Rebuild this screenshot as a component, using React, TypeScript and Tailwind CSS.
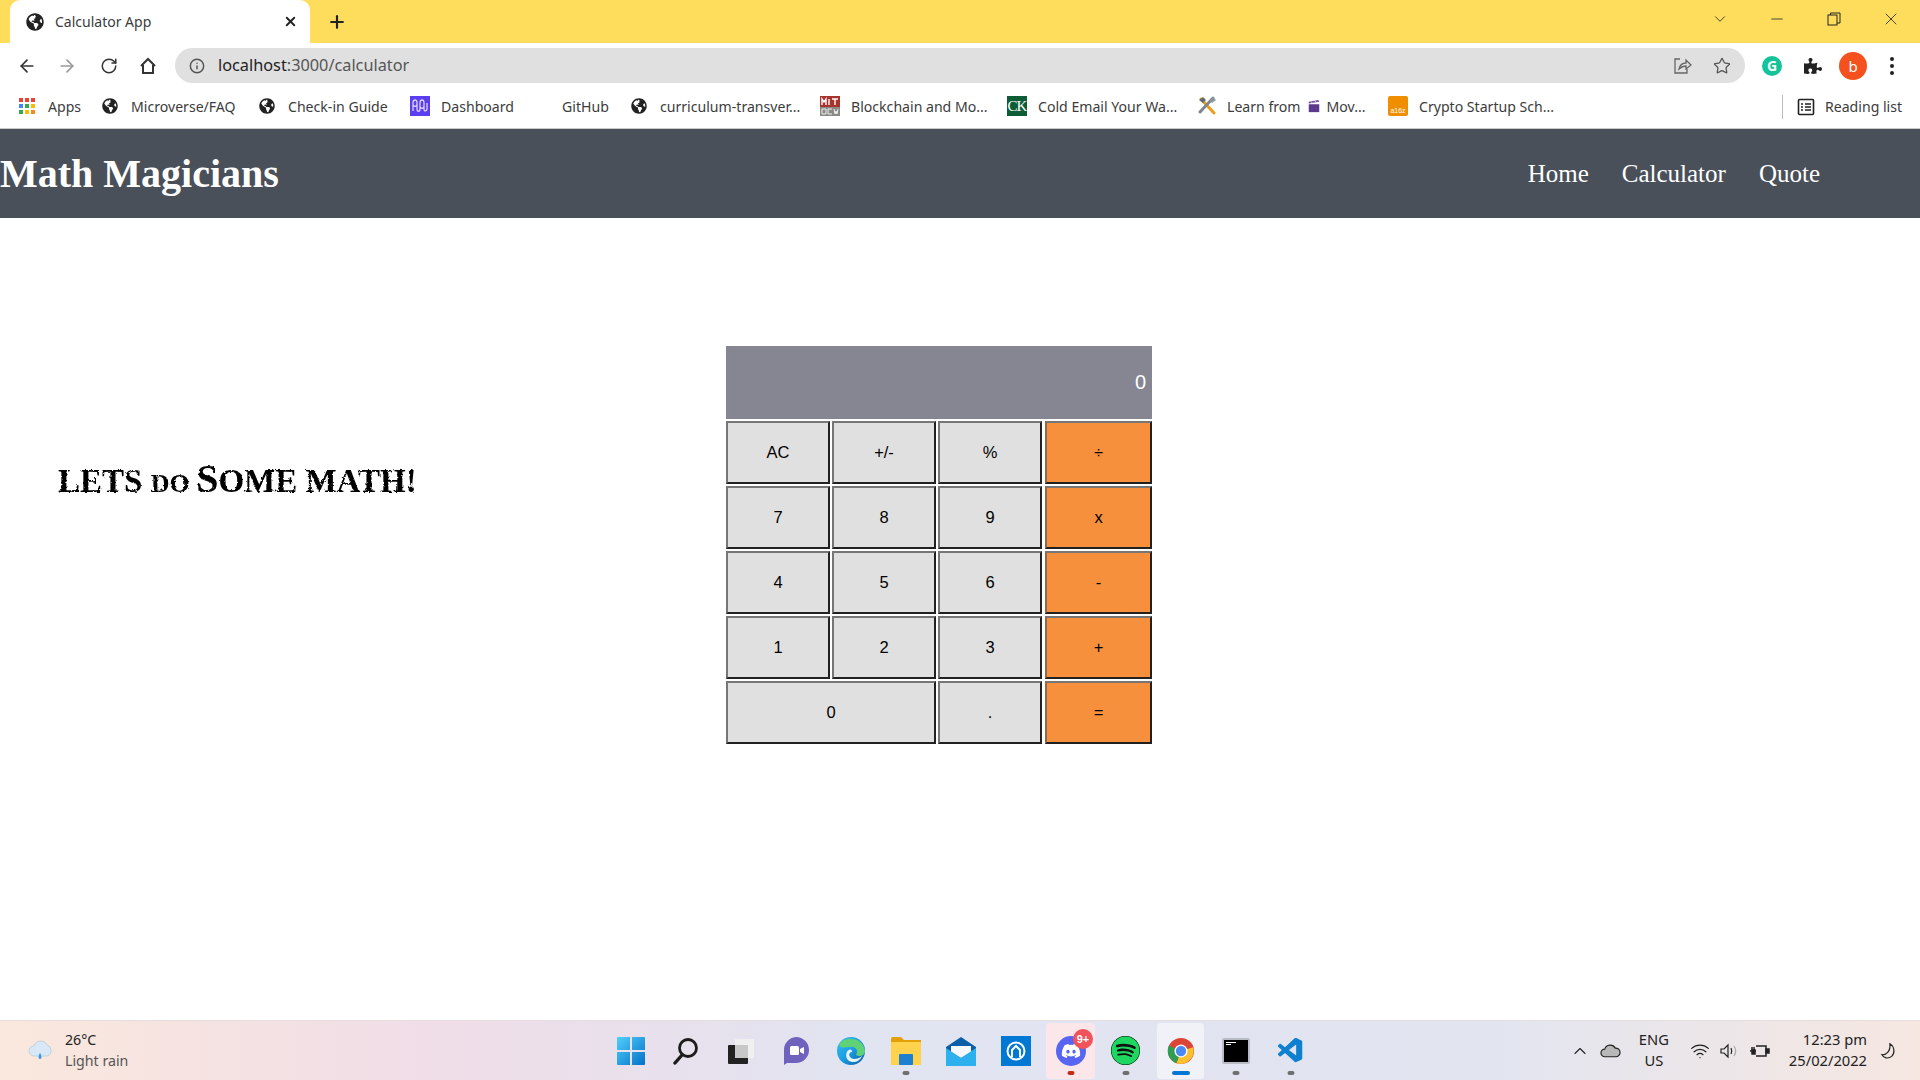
import { ReactNode } from 'react'
import { ArrowLeft, ArrowRight, RotateCw, Info, Star, X, Plus, ChevronDown, ChevronUp, Minus, Wifi } from 'lucide-react'
import { FaGlobeAmericas, FaPuzzlePiece, FaDiscord, FaSpotify } from 'react-icons/fa'
import { VscVscode } from 'react-icons/vsc'

const ui = "font-['Noto_Sans','Open_Sans',sans-serif]"
const times = "font-['Liberation_Serif','Times_New_Roman',serif]"
const arial = "font-['Liberation_Sans',Arial,sans-serif]"

function Globe() {
  return <FaGlobeAmericas className="w-4 h-4 text-[#222] shrink-0" />
}

function AppsIcon() {
  const dots = ['#ea4335', '#ea4335', '#ea4335', '#4285f4', '#34a853', '#fbbc05', '#34a853', '#fbbc05', '#f28b20']
  return (
    <div className="grid grid-cols-3 gap-[2px] w-4 h-4 shrink-0">
      {dots.map((c, i) => (
        <svg key={i} viewBox="0 0 4 4" className="w-full h-full"><rect width="4" height="4" fill={c} /></svg>
      ))}
    </div>
  )
}

function DashIcon() {
  return (
    <svg viewBox="0 0 20 20" className="w-5 h-5 shrink-0 -ml-[2px] -mr-[2px]">
      <rect width="20" height="20" fill="#5a3ff0" />
      <path d="M3 15V7c0-4 4-4 4 0v6c0 3 3 3 3 0V7c0-4 4-4 4 0v6c0 3 3 2 3 0V7M3 8c0 3 4 3 4 0M10 10c0 3 4 3 4 0" fill="none" stroke="#d9d2ff" strokeWidth="1.3" />
    </svg>
  )
}

function MitIcon() {
  return (
    <svg viewBox="0 0 20 20" className="w-5 h-5 shrink-0 -ml-[2px] -mr-[2px]">
      <rect width="20" height="11" fill="#a8322c" />
      <rect y="11" width="20" height="9" fill="#8a8a86" />
      <path d="M2 9V3l2 3 2-3v6M9 3v6M12 3h6M15 3v6" fill="none" stroke="#fff" strokeWidth="1.4" />
      <path d="M2 13h4v5H2zM12 13H8v5h4M14 13l1 5 1-3 1 3 1-5" fill="none" stroke="#eee" strokeWidth="1" />
    </svg>
  )
}

function CkIcon() {
  return (
    <div className={`w-5 h-5 -ml-[2px] -mr-[2px] shrink-0 bg-[#0d5c36] text-white text-[15px] leading-5 text-center tracking-[-1px] ${times}`}>CK</div>
  )
}

function ToolsIcon() {
  return (
    <svg viewBox="0 0 20 20" className="w-5 h-5 shrink-0 -ml-[2px] -mr-[2px]">
      <path d="M4 3l13 14" stroke="#f09a1a" strokeWidth="3" strokeLinecap="round" />
      <path d="M16 2l-13 14" stroke="#7b8690" strokeWidth="3" strokeLinecap="round" />
      <path d="M2 4l4-3 3 3-3 3z" fill="#5f6a73" />
      <path d="M13 5l3-4 3 3-4 3z" fill="#8d98a1" />
    </svg>
  )
}

function ClapperIcon() {
  return (
    <svg viewBox="0 0 16 16" className="w-[14px] h-[14px] shrink-0">
      <rect x="2" y="6" width="12" height="9" fill="#5b3a8e" />
      <path d="M2 3l11-2 1 2-12 2z" fill="#7a4fa8" />
      <path d="M5 3l1 2M9 2l1 2" stroke="#ddd" strokeWidth="1" />
    </svg>
  )
}

function A16zIcon() {
  return (
    <div className={`w-5 h-5 -ml-[2px] -mr-[2px] shrink-0 rounded-[2px] bg-[#ef8f00] text-white text-[7px] leading-none flex items-end justify-center pb-[2px] ${arial}`}>a16z</div>
  )
}

function Bookmark({ icon, label, className }: { icon?: ReactNode; label: string; className: string }) {
  return (
    <div className={`flex items-center gap-[13px] shrink-0 whitespace-nowrap ${className}`}>
      {icon}
      <span>{label}</span>
    </div>
  )
}

function Browser() {
  return (
    <div className={`${ui} text-[#3c3c3c]`}>
      <div className="h-[43px] bg-[#ffdd5c] flex items-end relative">
        <div className="ml-[10px] w-[300px] h-[43px] mt-0 bg-white rounded-t-[10px] flex items-center pl-[16px] pr-[12px]">
          <FaGlobeAmericas className="w-[18px] h-[18px] text-[#222] shrink-0" />
          <span className="ml-[11px] pb-[1px] text-[14px] flex-1">Calculator App</span>
          <X className="w-[15px] h-[15px] text-[#222]" strokeWidth={3} />
        </div>
        <Plus className="w-[20px] h-[20px] ml-[17px] mb-[11px] text-[#222]" strokeWidth={2.6} />
        <div className="ml-auto flex items-center h-[38px] self-start text-[#333]">
          <ChevronDown className="w-[18px] h-[18px] mr-[39px]" strokeWidth={1.2} />
          <Minus className="w-[18px] h-[18px] mr-[41px]" strokeWidth={1.2} />
          <svg viewBox="0 0 14 14" className="w-[14px] h-[14px] mr-[40px]" fill="none" stroke="#222" strokeWidth="1">
            <rect x="1" y="3" width="9" height="10" />
            <path d="M3.500 3V1h9.500v10h-3" />
          </svg>
          <X className="w-[20px] h-[20px] mr-[19px]" strokeWidth={1.1} />
        </div>
      </div>

      <div className="h-[44px] bg-white flex items-center pt-[1px]">
        <div className="w-[175px] flex items-center pl-[17px] gap-[20px] shrink-0 text-[#333]">
          <ArrowLeft className="w-[20px] h-[20px]" strokeWidth={2} />
          <ArrowRight className="w-[20px] h-[20px] text-[#9a9a9a]" strokeWidth={2} />
          <RotateCw className="w-[18px] h-[18px] ml-[3px]" strokeWidth={2} />
          <svg viewBox="0 0 20 20" className="w-[20px] h-[20px]" fill="none" stroke="#333" strokeWidth="2">
            <path d="M3 10l7-7 7 7M5 9v8h10V9" />
          </svg>
        </div>
        <div className="w-[1570px] h-[35px] bg-[#e0e0e0] rounded-full flex items-center pl-[14px] pr-[10px] shrink-0">
          <Info className="w-[16px] h-[16px] text-[#555]" strokeWidth={2.2} />
          <span className="ml-[13px] text-[16.300px] text-[#222]">localhost<span className="text-[#555]">:3000/calculator</span></span>
          <svg viewBox="0 0 20 20" className="w-[20px] h-[20px] ml-auto mr-[21px]" fill="none" stroke="#666" strokeWidth="1.300">
            <path d="M8 3H3v14h12v-4M7 13c1-4 4-6 7-6V4l5 5-5 4v-3c-3 0-5 1-7 3z" />
          </svg>
          <Star className="w-[18px] h-[18px] text-[#555] mr-[4px]" strokeWidth={1.700} />
        </div>
        <div className="flex items-center ml-[17px]">
          <div className="w-[20px] h-[20px] rounded-full bg-[#15c39a] text-white text-[14px] leading-5 text-center font-bold">G</div>
          <FaPuzzlePiece className="w-[18px] h-[18px] ml-[22px] text-[#222]" />
          <div className="w-[28px] h-[28px] rounded-full bg-[#f4511e] text-white text-[15px] leading-7 text-center ml-[17px]">b</div>
          <div className="ml-[23px] flex flex-col gap-[3px]">
            <div className="w-[4px] h-[4px] rounded-full bg-[#222]" />
            <div className="w-[4px] h-[4px] rounded-full bg-[#222]" />
            <div className="w-[4px] h-[4px] rounded-full bg-[#222]" />
          </div>
        </div>
      </div>

      <div className="h-[42px] bg-white flex items-center pl-[19px] pb-[2px] text-[14.100px] border-b border-[#c8c8c8]">
        <Bookmark className="w-[83px]" icon={<AppsIcon />} label="Apps" />
        <Bookmark className="w-[157px]" icon={<Globe />} label="Microverse/FAQ" />
        <Bookmark className="w-[153px]" icon={<Globe />} label="Check-in Guide" />
        <Bookmark className="w-[130px]" icon={<DashIcon />} label="Dashboard" />
        <Bookmark className="w-[89px] pl-[20px]" label="GitHub" />
        <Bookmark className="w-[191px]" icon={<Globe />} label="curriculum-transver..." />
        <Bookmark className="w-[187px]" icon={<MitIcon />} label="Blockchain and Mo..." />
        <Bookmark className="w-[190px]" icon={<CkIcon />} label="Cold Email Your Wa..." />
        <div className="w-[191px] flex items-center shrink-0 whitespace-nowrap">
          <ToolsIcon />
          <span className="ml-[12px]">Learn from</span>
          <span className="ml-[6px] mr-[6px]"><ClapperIcon /></span>
          <span>Mov...</span>
        </div>
        <Bookmark className="w-[392px]" icon={<A16zIcon />} label="Crypto Startup Sch..." />
        <div className="w-px h-[24px] bg-[#bbb] shrink-0" />
        <svg viewBox="0 0 18 18" className="w-[18px] h-[18px] ml-[14px] shrink-0" fill="none" stroke="#222" strokeWidth="1.600">
          <rect x="1.500" y="1.500" width="15" height="15" rx="1" />
          <path d="M4 6h2M8 6h6M4 9h2M8 9h6M4 12h2M8 12h6" />
        </svg>
        <span className="ml-[10px] whitespace-nowrap">Reading list</span>
      </div>
    </div>
  )
}

function Navbar() {
  return (
    <nav className={`h-[89px] bg-[#4a5059] flex items-center justify-between pr-[100px] text-white ${times}`}>
      <h1 className="text-[40px] font-bold leading-none">Math Magicians</h1>
      <ul className="flex gap-[33px] text-[25px]">
        <li>Home</li>
        <li>Calculator</li>
        <li>Quote</li>
      </ul>
    </nav>
  )
}

const keyClass = `h-[63px] flex items-center justify-center text-[16.500px] text-black border-2 ${arial}`
const greyKey = `${keyClass} bg-[#e0e0e0] border-t-[#767676] border-l-[#767676] border-r-[#212121] border-b-[#212121]`
const orangeKey = `${keyClass} ml-px bg-[#f6903d] border-t-[#767676] border-l-[#8a6a50] border-r-[#212121] border-b-[#212121]`

function Calculator() {
  const rows = [
    ['AC', '+/-', '%', '÷'],
    ['7', '8', '9', 'x'],
    ['4', '5', '6', '-'],
    ['1', '2', '3', '+'],
  ]
  return (
    <div className="grid grid-cols-[104px_104px_104px_108px] gap-[2px] w-[426px] shrink-0">
      <div className={`col-span-4 h-[73px] bg-[#858692] text-white text-[20px] flex items-center justify-end pr-[6px] pb-[1px] ${arial}`}>0</div>
      {rows.flat().map((k, i) => (
        <button key={i} className={i % 4 === 3 ? orangeKey : greyKey}>{k}</button>
      ))}
      <button className={`${greyKey} col-span-2`}>0</button>
      <button className={greyKey}>.</button>
      <button className={orangeKey}>=</button>
    </div>
  )
}

function Heading() {
  return (
    <div className="w-[726px] pl-[58px] shrink-0 pt-[113px]">
      <svg className="w-0 h-0 absolute">
        <filter id="rough">
          <feTurbulence type="fractalNoise" baseFrequency="0.4" numOctaves="2" seed="4" />
          <feDisplacementMap in="SourceGraphic" scale="3" />
        </filter>
      </svg>
      <h2 className={`text-[33px] leading-[40px] font-bold text-black whitespace-nowrap [filter:url(#rough)] ${times}`}>
        LETS <span className="text-[26px]">DO </span><span className="text-[40px]">S</span>OME MATH!
      </h2>
    </div>
  )
}

function TaskIcon({ children, className = '' }: { children: ReactNode; className?: string }) {
  return <div className={`w-[55px] h-[60px] flex items-center justify-center shrink-0 relative ${className}`}>{children}</div>
}

function Pip({ className }: { className: string }) {
  return <div className={`absolute bottom-[6px] left-1/2 -translate-x-1/2 h-[4px] rounded-full ${className}`} />
}

function Taskbar() {
  return (
    <div className={`h-[60px] flex items-center border-t border-[#e6dedc] bg-[linear-gradient(90deg,#fae8dd_0%,#f0dde7_22%,#e1e4f1_45%,#e2e5f0_78%,#f6e7e1_100%)] ${ui}`}>
      <div className="w-[603px] shrink-0 flex items-center pl-[27px] text-[14.200px] leading-[21px]">
        <svg viewBox="0 0 28 26" className="w-[28px] h-[26px]">
          <path d="M7 18a5 5 0 0 1 0-10 7 7 0 0 1 13-1 6 6 0 0 1 1 11z" fill="#d8e8f6" stroke="#a8c0d6" strokeWidth="0.600" />
          <path d="M13 15c-2 3-2 6 0 6s2-3 0-6z" fill="#3b9be0" />
        </svg>
        <div className="ml-[10px] pb-[2px]">
          <div className="text-[#222]">26°C</div>
          <div className="text-[#555]">Light rain</div>
        </div>
      </div>

      <div className="flex items-center">
        <TaskIcon>
          <svg viewBox="0 0 28 28" className="w-[28px] h-[28px]">
            <defs>
              <linearGradient id="win" x1="0" y1="0" x2="1" y2="1">
                <stop offset="0" stopColor="#4fd0fb" />
                <stop offset="1" stopColor="#0570c9" />
              </linearGradient>
            </defs>
            <path d="M0 1a1 1 0 0 1 1-1h12v13H0zM15 0h12a1 1 0 0 1 1 1v12H15zM0 15h13v13H1a1 1 0 0 1-1-1zM15 15h13v12a1 1 0 0 1-1 1H15z" fill="url(#win)" />
          </svg>
        </TaskIcon>
        <TaskIcon>
          <svg viewBox="0 0 28 28" className="w-[28px] h-[28px]" fill="none" stroke="#1c1c1c">
            <circle cx="16" cy="11" r="8.500" strokeWidth="2.800" />
            <path d="M10 18l-7 8" strokeWidth="3.400" strokeLinecap="round" />
          </svg>
        </TaskIcon>
        <TaskIcon>
          <svg viewBox="0 0 28 28" className="w-[28px] h-[28px]">
            <rect x="8" y="2" width="19" height="19" fill="#f0f0f0" />
            <rect x="1" y="8" width="20" height="19" rx="1" fill="#222" />
            <rect x="8" y="8" width="13" height="13" fill="#c8c8c8" />
          </svg>
        </TaskIcon>
        <TaskIcon>
          <svg viewBox="0 0 28 30" className="w-[28px] h-[30px]">
            <path d="M14 1a13 13 0 0 1 0 26H5l-3 2v-14A13 13 0 0 1 14 1z" fill="#6f62bd" />
            <rect x="8" y="10" width="9" height="9" rx="1.500" fill="#fff" />
            <path d="M18 13l4-2v7l-4-2z" fill="#fff" />
          </svg>
        </TaskIcon>
        <TaskIcon>
          <svg viewBox="0 0 30 30" className="w-[30px] h-[30px]">
            <defs>
              <linearGradient id="edge" x1="0" y1="0" x2="1" y2="1">
                <stop offset="0" stopColor="#35c1f1" />
                <stop offset="0.500" stopColor="#1b9de2" />
                <stop offset="1" stopColor="#0c59a4" />
              </linearGradient>
            </defs>
            <circle cx="15" cy="15" r="14" fill="url(#edge)" />
            <path d="M3 9C7 0 27 0 29 15c0 5-6 6-9 4 3-5-1-9-6-8-5 0-9 2-11-2z" fill="#5fd277" />
            <path d="M16 16c-4 0-4 6 2 7 3 0 6-1 8-3-2 6-10 8-14 4-3-3-2-9 1-10 2-1 3 0 3 2z" fill="#e6f3fb" />
          </svg>
        </TaskIcon>
        <TaskIcon>
          <svg viewBox="0 0 30 28" className="w-[30px] h-[28px]">
            <path d="M0 2a2 2 0 0 1 2-2h8l3 3h17v5H0z" fill="#e3a008" />
            <rect y="5" width="30" height="23" rx="1" fill="#ffd24d" />
            <rect x="8" y="17" width="14" height="11" rx="1" fill="#1c7fd0" />
          </svg>
          <Pip className="w-[7px] bg-[#6f6f6f]" />
        </TaskIcon>
        <TaskIcon>
          <svg viewBox="0 0 30 30" className="w-[30px] h-[30px]">
            <path d="M15 1l15 10v18H0V11z" fill="#0a5fa8" />
            <path d="M5 10h20v6l-10 6-10-6z" fill="#f4f7fb" />
            <path d="M0 12l15 10 15-10v18H0z" fill="#2cb1ee" />
          </svg>
        </TaskIcon>
        <TaskIcon>
          <div className="w-[30px] h-[30px] bg-[#0078d4] flex items-center justify-center">
            <svg viewBox="0 0 20 20" className="w-[20px] h-[20px]" fill="none" stroke="#fff">
              <circle cx="10" cy="10" r="8.500" strokeWidth="2" />
              <path d="M6 16V9l4-4 4 4v7" strokeWidth="2" />
            </svg>
          </div>
        </TaskIcon>
        <TaskIcon>
          <div className="w-[49px] h-[56px] rounded-[4px] bg-[#fbe7ea] flex items-center justify-center">
            <div className="w-[30px] h-[30px] rounded-full bg-[#5865f2] flex items-center justify-center">
              <FaDiscord className="w-[20px] h-[20px] text-white" />
            </div>
          </div>
          <div className={`absolute top-[8px] right-[5px] w-[20px] h-[20px] rounded-full bg-[#f0535a] text-white text-[11px] leading-[20px] text-center font-bold ${arial}`}>9+</div>
          <Pip className="w-[7px] bg-[#c42b1c]" />
        </TaskIcon>
        <TaskIcon>
          <div className="w-[29px] h-[29px] rounded-full bg-[#1ed760] flex items-center justify-center">
            <FaSpotify className="w-[29px] h-[29px] text-[#1ed760] bg-[#111] rounded-full" />
          </div>
          <Pip className="w-[7px] bg-[#6f6f6f]" />
        </TaskIcon>
        <TaskIcon>
          <div className="w-[47px] h-[56px] rounded-[4px] bg-[#f1f1f8] flex items-center justify-center">
            <svg viewBox="0 0 30 30" className="w-[28px] h-[28px]">
              <circle cx="15" cy="15" r="14" fill="#db4437" />
              <path d="M15 15L28 11A14 14 0 0 1 10 28z" fill="#fbc02d" />
              <path d="M15 15L10 28A14 14 0 0 1 2 9z" fill="#2e9e52" />
              <circle cx="15" cy="15" r="7" fill="#fff" />
              <circle cx="15" cy="15" r="5.500" fill="#4a8af4" />
            </svg>
          </div>
          <Pip className="w-[18px] bg-[#0078d4]" />
        </TaskIcon>
        <TaskIcon>
          <div className="w-[28px] h-[26px] bg-black border-2 border-[#b8bcc4] rounded-[2px] pl-[2px] pt-[1px] leading-none">
            <div className="w-[10px] h-[1px] bg-white mt-[1px]" />
            <div className="w-[5px] h-[1px] bg-white mt-[1px]" />
          </div>
          <Pip className="w-[7px] bg-[#6f6f6f]" />
        </TaskIcon>
        <TaskIcon>
          <VscVscode className="w-[30px] h-[30px] text-[#0f7fcf]" />
          <Pip className="w-[7px] bg-[#6f6f6f]" />
        </TaskIcon>
      </div>

      <div className="ml-auto flex items-center text-[#222] text-[14.700px] leading-[21px] pr-[22px]">
        <ChevronUp className="w-[20px] h-[20px]" strokeWidth={1.300} />
        <svg viewBox="0 0 22 14" className="w-[21px] h-[14px] ml-[10px]">
          <path d="M5 13a4 4 0 0 1 0-8 6 6 0 0 1 11-1 4.500 4.500 0 0 1 1 9z" fill="#b8b8b8" stroke="#222" strokeWidth="1.200" />
        </svg>
        <div className="ml-[18px] text-center pb-[2px]">
          <div>ENG</div>
          <div>US</div>
        </div>
        <Wifi className="w-[20px] h-[20px] ml-[21px]" strokeWidth={1.500} />
        <svg viewBox="0 0 20 20" className="w-[20px] h-[20px] ml-[8px]" fill="none" stroke="#222" strokeWidth="1.200">
          <path d="M3 8h3l4-4v12l-4-4H3z" />
          <path d="M13 7c1 2 1 4 0 6" />
          <path d="M16 5c2 3 2 7 0 10" stroke="#aaa" />
        </svg>
        <svg viewBox="0 0 22 20" className="w-[22px] h-[20px] ml-[11px]" fill="none" stroke="#222" strokeWidth="1.500">
          <path d="M7 5h10v10H7" />
          <path d="M1 10h6M3 6v3M5 6v3" />
          <path d="M3 9h3v4H3z" fill="#222" />
          <rect x="17" y="8" width="3" height="4" fill="#222" />
        </svg>
        <div className="ml-[18px] text-right pb-[2px]">
          <div>12:23 pm</div>
          <div>25/02/2022</div>
        </div>
        <svg viewBox="0 0 20 20" className="w-[18px] h-[18px] ml-[13px]" fill="none" stroke="#222" strokeWidth="1.300">
          <path d="M11 2c5 3 6 10 2 14-4 3-9 2-11-2 5 1 10-4 9-12z" />
        </svg>
      </div>
    </div>
  )
}

export default function App() {
  return (
    <div className="h-screen w-full overflow-hidden flex flex-col bg-white">
      <Browser />
      <Navbar />
      <main className="flex-1 flex items-start pt-[128px]">
        <Heading />
        <Calculator />
      </main>
      <Taskbar />
    </div>
  )
}
